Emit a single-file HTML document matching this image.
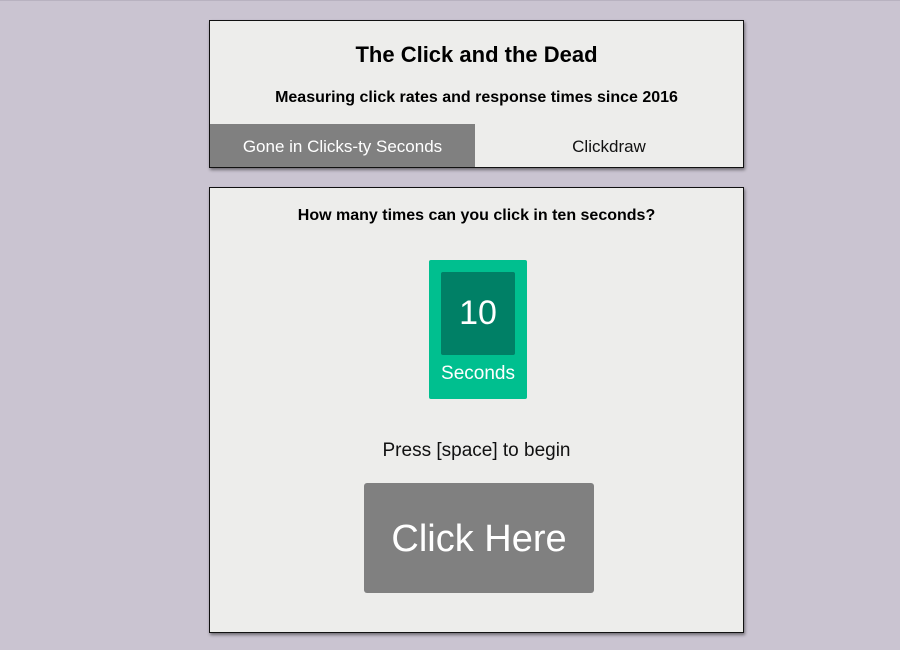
<!DOCTYPE html>
<html><head><style>
body{margin:0;width:900px;height:650px;background:#cac4d1;font-family:"Liberation Sans",sans-serif;position:relative;overflow:hidden}
.p{position:absolute;left:209px;width:533px;background:#ededeb;border:1px solid #111;box-shadow:1px 2px 3px rgba(0,0,0,.45)}
.c{position:absolute;left:0;width:100%;text-align:center;color:#000}
</style></head><body>
<div style="position:absolute;left:0;top:0;width:900px;height:1px;background:#b8b2c0"></div>
<div class="p" style="top:20px;height:146px">
 <div class="c" style="top:21px;font-size:22px;font-weight:bold">The Click and the Dead</div>
 <div class="c" style="top:68px;font-size:16px;font-weight:bold">Measuring click rates and response times since 2016</div>
 <div style="position:absolute;left:0;top:103px;width:265px;height:43px;background:#808080;color:#fff;font-size:17px;text-align:center;line-height:45px">Gone in Clicks-ty Seconds</div>
 <div style="position:absolute;left:265px;top:103px;width:268px;height:43px;color:#111;font-size:17px;text-align:center;line-height:45px">Clickdraw</div>
</div>
<div class="p" style="top:187px;height:444px">
 <div class="c" style="top:19px;font-size:16px;font-weight:bold">How many times can you click in ten seconds?</div>
 <div style="position:absolute;left:219px;top:72px;width:98px;height:139px;background:#00bf8f;border-radius:2px">
  <div style="position:absolute;left:12px;top:12px;width:74px;height:83px;background:#008066;border-radius:2px;color:#fff;font-size:34px;text-align:center;line-height:82px">10</div>
  <div style="position:absolute;left:0;top:103px;width:100%;text-align:center;color:#fff;font-size:19px">Seconds</div>
 </div>
 <div class="c" style="top:252px;font-size:19px;color:#111">Press [space] to begin</div>
 <div style="position:absolute;left:154px;top:295px;width:230px;height:110px;background:#808080;border-radius:3px;color:#fff;font-size:38px;text-align:center;line-height:113px">Click Here</div>
</div>
</body></html>
